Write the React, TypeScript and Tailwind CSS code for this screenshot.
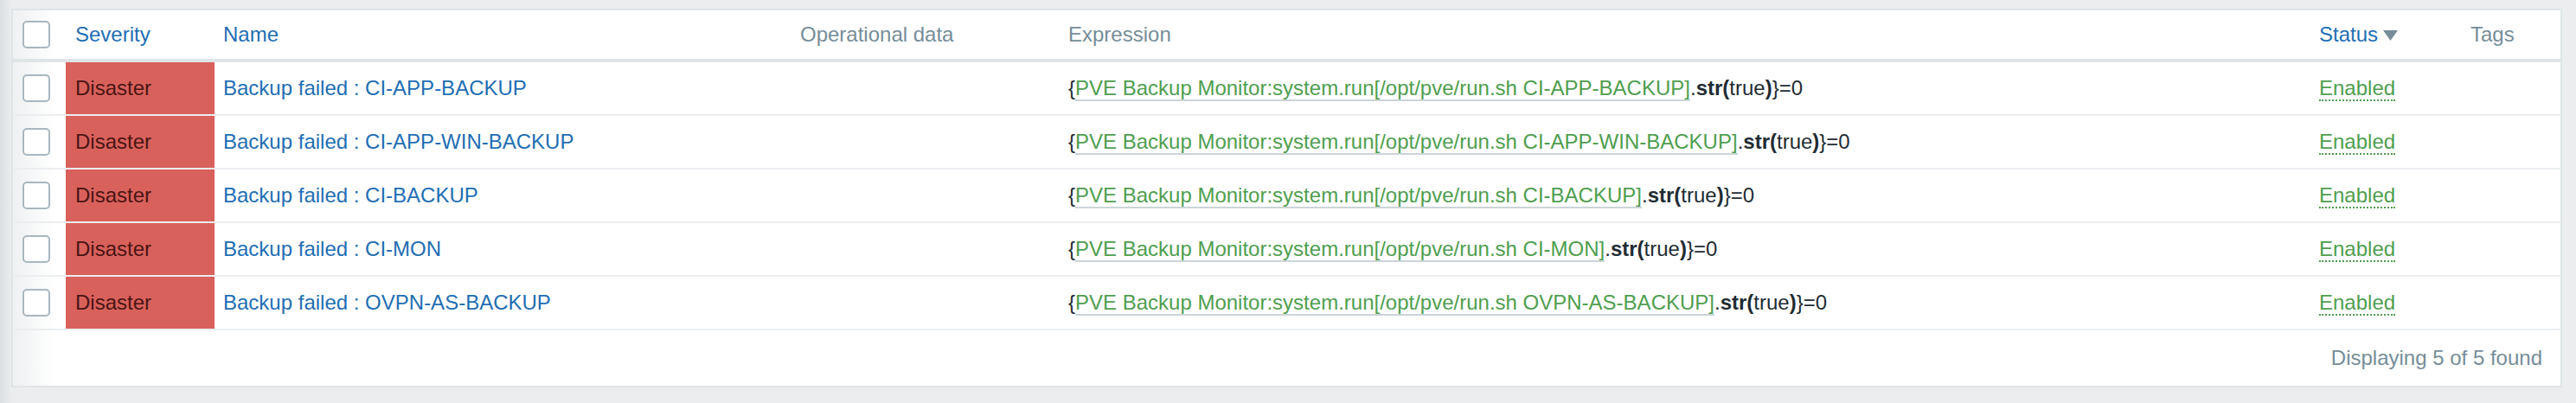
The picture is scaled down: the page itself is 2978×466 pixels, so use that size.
const triggers = ["CI-APP-BACKUP", "CI-APP-WIN-BACKUP", "CI-BACKUP", "CI-MON", "OVPN-AS-BACKUP"];

const cols = "grid grid-cols-[61px_172px_667px_310px_1446px_175px_1fr]";

const Checkbox = () => (
  <div className="ml-[11px] w-[32px] h-[32px] rounded-[5px] border-2 border-[#a9b7bf] bg-white" />
);

export default function App() {
  return (
    <div className="min-h-[466px] bg-[linear-gradient(to_right,#dcdfe2,#ebedef_14px)] pl-[13px] pr-[16px] pt-[10px] pb-[18px] font-['Liberation_Sans',Arial,sans-serif] text-[24px] leading-normal text-[#1f2c33]">
      <div className="border-2 border-[#dfe4e7] bg-[linear-gradient(to_right,#eef0f1,#ffffff_48px)]">
        {/* Header */}
        <div className={`${cols} h-[60px] items-center border-b-4 border-[#dfe4e7]`}>
          <Checkbox />
          <div className="pl-[11px] text-[#1f6eb3]">Severity</div>
          <div className="pl-[10px] text-[#1f6eb3]">Name</div>
          <div className="pl-[10px] text-[#768d99]">Operational data</div>
          <div className="pl-[10px] text-[#768d99]">Expression</div>
          <div className="pl-[10px] flex items-center gap-[6px] text-[#1f6eb3]">
            Status
            <svg width="17" height="12" viewBox="0 0 17 12" className="mt-[2px]">
              <path d="M0 0 H17 L8.5 12 Z" fill="#768d99" />
            </svg>
          </div>
          <div className="pl-[10px] text-[#768d99]">Tags</div>
        </div>

        {/* Rows */}
        {triggers.map((host) => (
          <div key={host} className={`${cols} h-[62px] items-center border-b-2 border-[#ebeef0]`}>
            <Checkbox />
            <div className="h-full flex items-center pl-[11px] bg-[#d9615c] text-[#4a1513]">Disaster</div>
            <div className="pl-[10px] text-[#1f6eb3] whitespace-nowrap">Backup failed : {host}</div>
            <div />
            <div className="pl-[10px] whitespace-nowrap">
              {"{"}
              <span className="text-[#4f9e4f] border-b-2 border-[#ccd4d9]">
                PVE Backup Monitor:system.run[/opt/pve/run.sh {host}]
              </span>
              .<span className="font-bold">str(</span>true<span className="font-bold">)</span>
              {"}=0"}
            </div>
            <div className="pl-[10px]">
              <span className="text-[#4f9e4f] border-b-2 border-dotted border-[#4f9e4f]">Enabled</span>
            </div>
            <div />
          </div>
        ))}

        {/* Footer */}
        <div className="h-[64px] flex items-center justify-end pr-[21px] text-[#768d99]">
          Displaying 5 of 5 found
        </div>
      </div>
    </div>
  );
}
